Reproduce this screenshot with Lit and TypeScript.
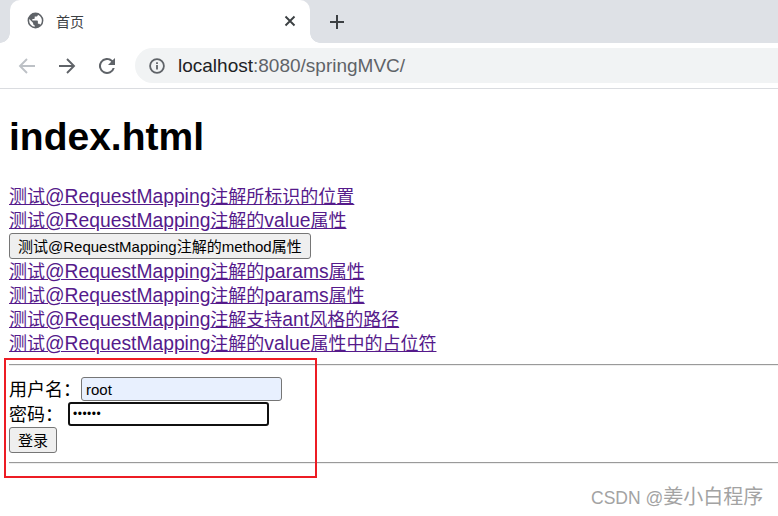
import { LitElement, html, css } from "lit";
import { customElement } from "lit/decorators.js";

const P = "测试@RequestMapping注解";

/* The reference's Latin runs are proportionally wider than its CJK runs, so each run gets its own class. */
const mix = (text: string) =>
  text.split(/([\x00-\x7f]+)/).filter(Boolean).map((part) =>
    /^[\x00-\x7f]+$/.test(part) ? html`<span class="l">${part}</span>` : part
  );

@customElement("app-root")
export class AppRoot extends LitElement {
  static styles = css`
    :host { display: block; position: relative; width: 778px; height: 516px; overflow: hidden; background: #fff; font-family: "Liberation Sans", "Noto Sans CJK SC", sans-serif; color: #000; }
    .tabstrip { height: 43px; background: #dee1e6; display: flex; align-items: flex-end; padding-left: 10px; box-sizing: border-box; }
    .tab { width: 300px; height: 43px; background: #fff; border-radius: 10px 10px 0 0; display: flex; align-items: center; padding: 0 14px 2px 16px; box-sizing: border-box; position: relative; }
    .tab::before, .tab::after { content: ""; position: absolute; bottom: 0; width: 10px; height: 10px; background: radial-gradient(circle at 0 0, transparent 9.5px, #fff 10px); }
    .tab::before { left: -10px; }
    .tab::after { right: -10px; background: radial-gradient(circle at 100% 0, transparent 9.5px, #fff 10px); }
    .tab-title { margin-left: 11px; font-size: 14px; color: #3c4043; flex: 1; }
    .plus { margin-left: 19px; margin-bottom: 13px; }
    .toolbar { height: 45px; border-bottom: 1px solid #dadce0; display: flex; align-items: center; padding-left: 18px; background: #fff; }
    .nav { display: flex; align-items: center; gap: 22px; }
    .reload { margin-left: -3px; }
    .omni { margin-left: 16px; flex: 1; height: 35px; border-radius: 18px 0 0 18px; background: #f1f3f4; display: flex; align-items: center; padding-left: 14px; box-sizing: border-box; font-size: 19px; color: #5f6368; }
    .omni b { font-weight: 400; color: #202124; }
    .omni svg { margin-right: 13px; }
    .page { padding: 0 0 0 9px; }
    h1 { font-size: 39px; line-height: 44px; font-weight: 700; margin: 0; padding-top: 26px; height: 70px; }
    .links { font-size: 18px; line-height: 24px; display: flex; flex-direction: column; align-items: flex-start; }
    .links a { display: block; height: 24px; }
    .links a .l { font-size: 19.3px; }
    a { color: #551a8b; text-decoration: underline; }
    .btn { font: 15px "Liberation Sans", "Noto Sans CJK SC", sans-serif; height: 26px; padding: 0 8px 2px; margin: 0 0 1px; background: #efefef; border: 1px solid #767676; border-radius: 3px; color: #000; display: inline-flex; align-items: center; justify-content: center; box-sizing: border-box; }
    hr { border: 0; border-top: 1px solid #9a9a9a; border-bottom: 1px solid #eee; height: 0; margin: 0 0 0 9px; }
    .rule1 { margin-top: 8px; }
    .rule2 { margin-top: 9px; }
    .form { padding: 11px 0 0; font-size: 18px; display: flex; flex-direction: column; align-items: flex-start; }
    .row { display: flex; align-items: flex-start; height: 25px; }
    .lbl { line-height: 24px; padding-top: 1px; }
    .lbl1 { width: 72px; }
    .lbl2 { width: 59px; }
    .field { box-sizing: border-box; width: 201px; height: 24px; border: 1px solid #767676; border-radius: 3px; background: #e8f0fe; font-size: 15px; padding: 0 4px; display: flex; align-items: center; }
    .field.focus { background: #fff; border: 2px solid #101010; padding: 0 3px; font-size: 12px; letter-spacing: 0.5px; }
    .login { margin: 0; width: 48px; }
    .mark { position: absolute; left: 4px; top: 358px; width: 313px; height: 120px; box-sizing: border-box; border: 2px solid #ed1c24; pointer-events: none; }
    .wm { position: absolute; left: 591px; top: 486px; font-size: 20px; line-height: 22px; color: #a3a3a3; white-space: nowrap; }
    .wm .l { font-size: 17.5px; }
  `;

  render() {
    return html`
      <div class="tabstrip">
        <div class="tab">
          <svg width="19" height="19" viewBox="0 0 24 24"><path fill="#5f6368" d="M12 2a10 10 0 1 0 0 20 10 10 0 0 0 0-20zM4 12c0-.6.1-1.2.2-1.8L9 15v1c0 1.1.9 2 2 2v1.9A8 8 0 0 1 4 12zm13.9 5.4c-.3-.8-1-1.4-1.9-1.4h-1v-3c0-.6-.4-1-1-1H8v-2h2c.6 0 1-.4 1-1V7h2c1.1 0 2-.9 2-2v-.4a8 8 0 0 1 2.9 12.8z"/></svg>
          <span class="tab-title">首页</span>
          <svg width="12" height="12" viewBox="0 0 12 12"><path d="M1.5 1.5l9 9M10.5 1.5l-9 9" stroke="#3c4043" stroke-width="1.9" fill="none"/></svg>
        </div>
        <svg class="plus" width="16" height="16" viewBox="0 0 16 16"><path d="M8 1v14M1 8h14" stroke="#3c4043" stroke-width="2" fill="none"/></svg>
      </div>
      <div class="toolbar">
        <div class="nav">
          <svg width="18" height="18" viewBox="0 0 18 18"><path d="M17 9H2.5M9 2L2 9l7 7" stroke="#bdc1c6" stroke-width="1.9" fill="none"/></svg>
          <svg width="18" height="18" viewBox="0 0 18 18"><path d="M1 9h14.5M9 2l7 7-7 7" stroke="#5f6368" stroke-width="1.9" fill="none"/></svg>
          <svg class="reload" width="24" height="24" viewBox="0 0 24 24"><path fill="#5f6368" d="M17.65 6.35A8 8 0 1 0 19.73 14h-2.08A6 6 0 1 1 12 6c1.66 0 3.14.69 4.22 1.78L13 11h7V4l-2.35 2.35z"/></svg>
        </div>
        <div class="omni">
          <svg width="16" height="16" viewBox="0 0 16 16"><circle cx="8" cy="8" r="6.9" fill="none" stroke="#5f6368" stroke-width="1.8"/><path d="M7.1 7h1.8v4.6H7.1zM7.1 4.2h1.8V6H7.1z" fill="#5f6368"/></svg>
          <span><b>localhost</b>:8080/springMVC/</span>
        </div>
      </div>
      <div class="page">
        <h1>index.html</h1>
        <div class="links">
          <a href="#">${mix(P + "所标识的位置")}</a>
          <a href="#">${mix(P + "的value属性")}</a>
          <span class="btn">${P}的method属性</span>
          <a href="#">${mix(P + "的params属性")}</a>
          <a href="#">${mix(P + "的params属性")}</a>
          <a href="#">${mix(P + "支持ant风格的路径")}</a>
          <a href="#">${mix(P + "的value属性中的占位符")}</a>
        </div>
      </div>
      <hr class="rule1" />
      <div class="page">
        <div class="form">
          <div class="row"><span class="lbl lbl1">用户名：</span><span class="field">root</span></div>
          <div class="row"><span class="lbl lbl2">密码：</span><span class="field focus">••••••</span></div>
          <span class="btn login">登录</span>
        </div>
      </div>
      <hr class="rule2" />
      <div class="mark"></div>
      <div class="wm">${mix("CSDN @")}姜小白程序</div>
    `;
  }
}
